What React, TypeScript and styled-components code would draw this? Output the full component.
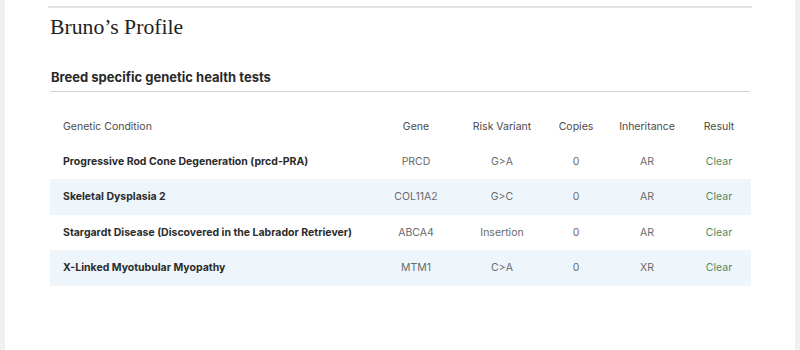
import React from "react";
import styled, { createGlobalStyle } from "styled-components";

const Global = createGlobalStyle`
  html, body { margin: 0; padding: 0; background: #fff; }
  body { font-family: Inter, "Noto Sans", sans-serif; -webkit-font-smoothing: antialiased; }
`;

const Page = styled.div`
  width: 800px;
  height: 350px;
  box-sizing: border-box;
  background: #fff;
  border-left: 5px solid #f0f0f0;
  border-right: 5px solid #f0f0f0;
  padding: 6px 43px 0 43px;
`;

const Card = styled.section`
  border-top: 2px solid #e2e2e2;
  padding: 0 2px;
`;

const Title = styled.h1`
  margin: 0;
  padding: 5px 0 0 0;
  font-family: "Liberation Serif", "DejaVu Serif", serif;
  font-weight: 400;
  font-size: 21.7px;
  line-height: 28px;
  color: #222;
`;

const SectionHead = styled.h2`
  margin: 27px 0 0 0;
  padding: 0 0 5px 1px;
  font-size: 13px;
  font-weight: 700;
  line-height: 18px;
  color: #2a2a2a;
  border-bottom: 1.5px solid #d4d4d4;
`;

const Table = styled.div`
  margin: 18px 0 0 0;
  display: grid;
  grid-template-columns: 323px 86px 86px 62px 80px 64px;
  grid-template-rows: 33.5px;
  grid-auto-rows: 35.5px;
  font-size: 10.5px;
`;

const Row = styled.div<{ $shaded?: boolean }>`
  display: contents;
  & > div {
    background: ${(p) => (p.$shaded ? "#eef6fc" : "transparent")};
  }
`;

const Cell = styled.div<{ $lead?: boolean; $head?: boolean; $tone?: "green" }>`
  display: flex;
  align-items: center;
  justify-content: ${(p) => (p.$lead ? "flex-start" : "center")};
  padding-left: ${(p) => (p.$lead ? "13px" : "0")};
  font-weight: ${(p) => (p.$lead && !p.$head ? 700 : 400)};
  color: ${(p) =>
    p.$tone === "green" ? "#4f8a63" : p.$head ? "#4a4a4a" : p.$lead ? "#2b2b2b" : "#6a6a6a"};
`;

const rows = [
  ["Progressive Rod Cone Degeneration (prcd-PRA)", "PRCD", "G>A", "0", "AR", "Clear"],
  ["Skeletal Dysplasia 2", "COL11A2", "G>C", "0", "AR", "Clear"],
  ["Stargardt Disease (Discovered in the Labrador Retriever)", "ABCA4", "Insertion", "0", "AR", "Clear"],
  ["X-Linked Myotubular Myopathy", "MTM1", "C>A", "0", "XR", "Clear"],
];

const headers = ["Genetic Condition", "Gene", "Risk Variant", "Copies", "Inheritance", "Result"];

export default function App() {
  return (
    <>
      <Global />
      <Page>
        <Card>
          <Title>Bruno’s Profile</Title>
          <SectionHead>Breed specific genetic health tests</SectionHead>
          <Table>
            <Row>
              {headers.map((h, i) => (
                <Cell key={h} $lead={i === 0} $head>
                  {h}
                </Cell>
              ))}
            </Row>
            {rows.map((r, ri) => (
              <Row key={r[0]} $shaded={ri % 2 === 1}>
                {r.map((v, i) => (
                  <Cell key={i} $lead={i === 0} $tone={i === 5 ? "green" : undefined}>
                    {v}
                  </Cell>
                ))}
              </Row>
            ))}
          </Table>
        </Card>
      </Page>
    </>
  );
}
